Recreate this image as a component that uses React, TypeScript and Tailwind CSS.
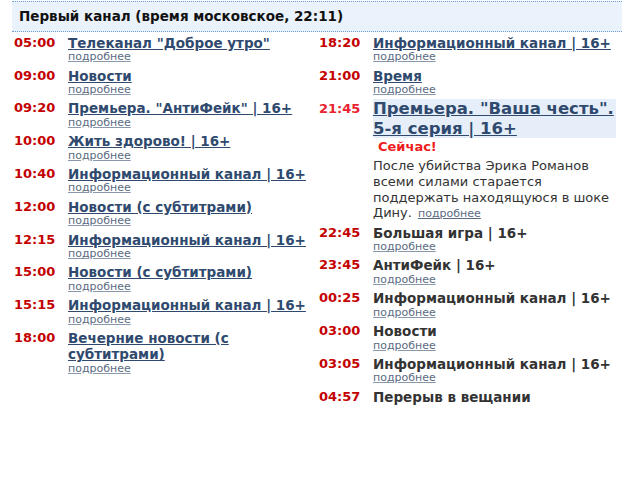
import React from 'react'

type Item = {
  time: string
  title: string
  link?: boolean
  more?: boolean
}

const left: Item[] = [
  { time: '05:00', title: 'Телеканал "Доброе утро"', link: true, more: true },
  { time: '09:00', title: 'Новости', link: true, more: true },
  { time: '09:20', title: 'Премьера. "АнтиФейк" | 16+', link: true, more: true },
  { time: '10:00', title: 'Жить здорово! | 16+', link: true, more: true },
  { time: '10:40', title: 'Информационный канал | 16+', link: true, more: true },
  { time: '12:00', title: 'Новости (с субтитрами)', link: true, more: true },
  { time: '12:15', title: 'Информационный канал | 16+', link: true, more: true },
  { time: '15:00', title: 'Новости (с субтитрами)', link: true, more: true },
  { time: '15:15', title: 'Информационный канал | 16+', link: true, more: true },
  { time: '18:00', title: 'Вечерние новости (с субтитрами)', link: true, more: true },
]

const before: Item[] = [
  { time: '18:20', title: 'Информационный канал | 16+', link: true, more: true },
  { time: '21:00', title: 'Время', link: true, more: true },
]

const after: Item[] = [
  { time: '22:45', title: 'Большая игра | 16+', more: true },
  { time: '23:45', title: 'АнтиФейк | 16+', more: true },
  { time: '00:25', title: 'Информационный канал | 16+', more: true },
  { time: '03:00', title: 'Новости', more: true },
  { time: '03:05', title: 'Информационный канал | 16+', more: true },
  { time: '04:57', title: 'Перерыв в вещании' },
]

function More() {
  return (
    <a className="block text-[11px] leading-[12px] text-[#5b6b82] underline decoration-[#8a98ad]">
      подробнее
    </a>
  )
}

function Row({ item }: { item: Item }) {
  return (
    <div className="flex mb-[4.3px]">
      <div className="w-[56px] shrink-0 pl-[2px] text-[13px] leading-[16.5px] font-bold text-[#c40000]">
        {item.time}
      </div>
      <div className="min-w-0 flex-1">
        {item.link ? (
          <a className="block text-[13.5px] leading-[16.5px] font-bold text-[#2f4a6e] underline">
            {item.title}
          </a>
        ) : (
          <div className="text-[13.5px] leading-[16.5px] font-bold text-[#333]">{item.title}</div>
        )}
        {item.more && <More />}
      </div>
    </div>
  )
}

export default function App() {
  return (
    <div
      className="w-[640px] h-[490px] bg-white pl-[12px] pr-[18px] pt-[1px]"
      style={{ fontFamily: '"DejaVu Sans", Verdana, sans-serif' }}
    >
      <div className="h-[31px] border-y border-dotted border-[#6d9fdc] bg-[#eaf2fb] pl-[7px] flex items-center">
        <h1 className="text-[13.5px] font-bold text-[#111]">Первый канал (время московское, 22:11)</h1>
      </div>

      <div className="grid grid-cols-2 pt-[2.75px]">
        <div className="pr-[4px]">
          {left.map((it, i) => (
            <Row key={i} item={it} />
          ))}
        </div>

        <div>
          {before.map((it, i) => (
            <Row key={i} item={it} />
          ))}

          {/* current programme */}
          <div className="flex -mt-[1px] mb-[3.5px]">
            <div className="w-[56px] shrink-0 pl-[2px] pt-[2px] text-[13px] leading-[16.5px] font-bold text-[#e8222e]">
              21:45
            </div>
            <div className="min-w-0 flex-1">
              <a className="block bg-[#e6eef9] mr-[6px] text-[16.5px] leading-[19.5px] font-bold text-[#2f4a6e] underline">
                Премьера. "Ваша честь". 5-я серия | 16+
              </a>
              <div className="pl-[5px] text-[13px] leading-[17px] font-bold text-[#ee1c1c]">Сейчас!</div>
              <p className="mt-[3px] text-[13px] leading-[15.7px] text-[#333] pr-[4px]">
                После убийства Эрика Романов всеми силами старается поддержать находящуюся в шоке Дину.{' '}
                <a className="inline-block ml-[2px] text-[11px] leading-[12px] text-[#5b6b82] underline">подробнее</a>
              </p>
            </div>
          </div>

          {after.map((it, i) => (
            <Row key={i} item={it} />
          ))}
        </div>
      </div>
    </div>
  )
}
